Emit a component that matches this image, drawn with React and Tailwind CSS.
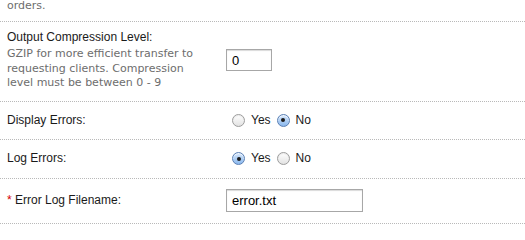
const label = "font-['Liberation_Sans',Arial,sans-serif] text-[12px] leading-[15px] text-[#1a1a1a]"
const help = "font-['DejaVu_Sans',Verdana,sans-serif] text-[11px] leading-[14.5px] text-[#6d6d6d]"
const row = 'flex items-center border-b border-dotted border-[#b9b9b9]'

function Radio({ checked }) {
  if (checked) {
    return (
      <span className="flex h-[13px] w-[13px] items-center justify-center rounded-full border border-[#5a7fb4] bg-[linear-gradient(#d6e7fb,#8ab8ee)] shadow-[inset_0_1px_1px_rgba(255,255,255,0.8)]">
        <span className="h-[4px] w-[4px] rounded-full bg-[#1c1c1c]" />
      </span>
    )
  }
  return (
    <span className="block h-[13px] w-[13px] rounded-full border border-[#9c9c9c] bg-[linear-gradient(#ffffff,#e2e2e2)] shadow-[inset_0_1px_1px_rgba(0,0,0,0.08)]" />
  )
}

function RadioPair({ yes }) {
  return (
    <div className={`flex items-center ${label}`}>
      <span className="ml-[6px]"><Radio checked={yes} /></span>
      <span className="ml-[6px]">Yes</span>
      <span className="ml-[6px]"><Radio checked={!yes} /></span>
      <span className="ml-[6px]">No</span>
    </div>
  )
}

function TextBox({ value, width }) {
  return (
    <div
      className={`flex items-center border border-[#a7a7a7] bg-white px-[5px] shadow-[inset_0_1px_1px_rgba(0,0,0,0.15)] ${label} text-[13px] text-black ${width}`}
    >
      {value}
    </div>
  )
}

export default function App() {
  return (
    <div className="w-[525px] bg-white">
      <div className="h-[22px] overflow-hidden border-b border-dotted border-[#b9b9b9] pl-[7px]">
        <p className={`${help} -mt-[1px]`}>orders.</p>
      </div>

      <div className={`${row} pb-[10px] pt-[8px]`}>
        <div className="w-[226px] shrink-0 pl-[7px]">
          <div className={label}>Output Compression Level:</div>
          <p className={`${help} mt-[2px] w-[196px]`}>
            GZIP for more efficient transfer to requesting clients. Compression level must be between 0 - 9
          </p>
        </div>
        <TextBox value="0" width="h-[22px] w-[46px]" />
      </div>

      <div className={`${row} h-[38px]`}>
        <div className={`w-[226px] shrink-0 pl-[7px] ${label}`}>Display Errors:</div>
        <RadioPair yes={false} />
      </div>

      <div className={`${row} h-[39px]`}>
        <div className={`w-[226px] shrink-0 pl-[7px] ${label}`}>Log Errors:</div>
        <RadioPair yes={true} />
      </div>

      <div className={`${row} h-[45px]`}>
        <div className={`w-[226px] shrink-0 pl-[7px] ${label}`}>
          <span className="text-[#d40000]">*</span> Error Log Filename:
        </div>
        <TextBox value="error.txt" width="h-[23px] w-[137px]" />
      </div>
    </div>
  )
}
